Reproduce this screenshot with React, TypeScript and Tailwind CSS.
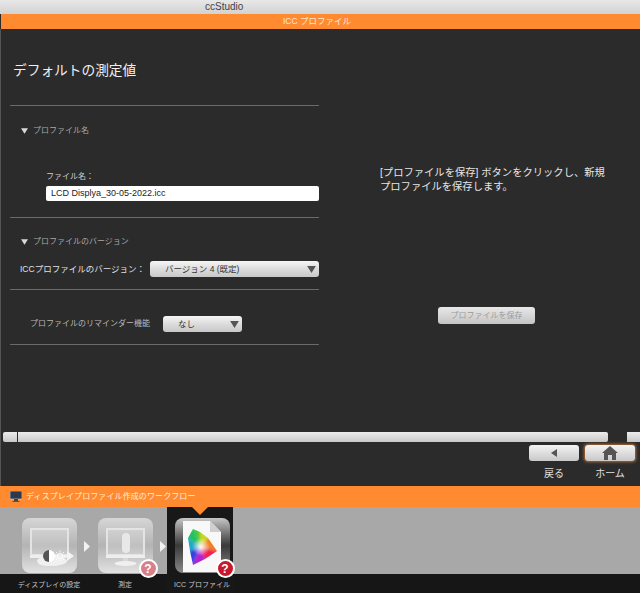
const JP = "font-['Liberation_Sans','Noto_Sans_CJK_JP',sans-serif]";

function Caret({ className = "" }: { className?: string }) {
	return (
		<svg viewBox="0 0 10 8" className={className}>
			<polygon points="0,0 10,0 5,8" fill="currentColor" />
		</svg>
	);
}

function Rule() {
	return <div className="h-px bg-[#6a6a6a] shrink-0" />;
}

function Section({ label }: { label: string }) {
	return (
		<div className="flex items-center gap-[5px] pl-[11px] h-3">
			<Caret className="w-[7px] h-[6px] text-[#d8d8d8] -mt-px" />
			<span className="text-[8px] leading-3 text-[#a8a8a8]">{label}</span>
		</div>
	);
}

function Select({ label, className }: { label: string; className: string }) {
	return (
		<div className={`flex items-center justify-between rounded-[3px] h-4 bg-gradient-to-b from-[#f6f6f6] via-[#dcdcdc] to-[#c8c8c8] ${className}`}>
			<span className="text-[8.5px] leading-4 text-[#333]">{label}</span>
			<Caret className="w-[11px] h-[7px] text-[#555]" />
		</div>
	);
}

function Badge({ faded = false }: { faded?: boolean }) {
	return (
		<div className={`absolute right-[-5px] bottom-[-5px] w-[19px] h-[19px] rounded-full border-2 border-white flex items-center justify-center text-white text-[12px] font-bold leading-none ${faded ? "bg-[#d8808a]" : "bg-[#c8182c]"}`}>
			?
		</div>
	);
}

function Monitor() {
	return (
		<svg viewBox="0 0 55 55" className="absolute inset-0 w-full h-full">
			<rect x="9" y="11" width="37" height="26" fill="#ffffff" fillOpacity="0.16" stroke="#e4e4e4" strokeWidth="2" />
			<rect x="8" y="37" width="39" height="3" fill="#eeeeee" />
			<rect x="25" y="40" width="5" height="4" fill="#d8d8d8" />
			<ellipse cx="27.5" cy="45.5" rx="11" ry="2.5" fill="#f0f0f0" />
		</svg>
	);
}

function Tile({ dark = false, children }: { dark?: boolean; children: React.ReactNode }) {
	return (
		<div className={`relative w-[55px] h-[55px] rounded-[8px] bg-gradient-to-b ${dark ? "from-[#c8c8c8] via-[#3a3a3a] to-[#8a8a8a]" : "from-[#d6d6d6] via-[#b4b4b4] to-[#e2e2e2]"}`}>
			{children}
		</div>
	);
}

function Step({ label, active = false, children }: { label: string; active?: boolean; children: React.ReactNode }) {
	return (
		<div className={`flex flex-col items-center ${active ? "w-[66px] pl-[4px] bg-[#181818]" : "w-[76px]"}`}>
			<div className="h-[67px] pb-px flex items-end">{children}</div>
			<div className="h-[19px] text-[7px] leading-[21px] text-[#c4c4c4] whitespace-nowrap">{label}</div>
		</div>
	);
}

function Arrow() {
	return (
		<svg viewBox="0 0 6 11" className="w-[6px] h-[11px] shrink-0 mt-[34px] mx-[-3px] z-10">
			<polygon points="0,0 6,5.5 0,11" fill="#f2f2f2" />
		</svg>
	);
}

const gamut = ["#f08020", "#c8d820", "#40c840", "#20c060", "#20a8c8", "#3040e0", "#b020d0", "#f02050"];
const edge = [
	[33, 33], [24, 20], [16, 14], [9, 11], [4, 20], [6, 33], [9, 47], [21, 41], [33, 33],
];

function IccIcon() {
	return (
		<svg viewBox="0 0 55 55" className="absolute inset-0 w-full h-full">
			<defs>
				<radialGradient id="core">
					<stop offset="0" stopColor="#ffffff" stopOpacity="0.95" />
					<stop offset="1" stopColor="#ffffff" stopOpacity="0" />
				</radialGradient>
				<clipPath id="shoe">
					<polygon points={edge.map((p) => p.join(",")).join(" ")} />
				</clipPath>
				<filter id="soft" x="-20%" y="-20%" width="140%" height="140%">
					<feGaussianBlur stdDeviation="1.6" />
				</filter>
			</defs>
			<polygon points="8,3 35,3 46,14 46,54 8,54" fill="#f8f8f8" />
			<polygon points="35,3 46,14 35,14" fill="#cfcfcf" />
			<g transform="translate(9 0)">
				<g clipPath="url(#shoe)">
					<g filter="url(#soft)">
						{gamut.map((fill, i) => (
							<polygon
								key={i}
								points={`16,29 ${edge[i][0] * 2 - 16},${edge[i][1] * 2 - 29} ${edge[i + 1][0] * 2 - 16},${edge[i + 1][1] * 2 - 29}`}
								fill={fill}
							/>
						))}
					</g>
					<circle cx="17" cy="29" r="9" fill="url(#core)" />
				</g>
			</g>
		</svg>
	);
}

export default function App() {
	return (
		<div className={`w-[640px] h-[593px] overflow-hidden flex flex-col bg-[#2b2b2b] ${JP}`}>
			<div className="h-[14px] shrink-0 pl-[205px] bg-gradient-to-b from-[#e8e8e8] to-[#d2d2d2] text-[10px] leading-[14px] text-[#444]">
				ccStudio
			</div>
			<div className="h-[15px] shrink-0 ml-px pl-[282px] bg-[#ff8a30] text-[8.5px] leading-[15px] text-[#ffe8d4]">
				ICC プロファイル
			</div>

			<div className="h-[457px] shrink-0 flex flex-col border-l border-[#555]">
				<div className="h-[403px] flex shrink-0">
					<div className="w-[309px] ml-[9px] shrink-0 flex flex-col">
						<h1 className="h-[76px] pl-[3px] pt-[33px] text-[13.7px] leading-[18px] text-[#f0f0f0]">デフォルトの測定値</h1>
						<Rule />
						<div className="mt-[19px]"><Section label="プロファイル名" /></div>
						<div className="mt-[34px] pl-[36px] text-[8px] leading-3 text-[#d0d0d0]">ファイル名：</div>
						<div className="mt-[3px] ml-[36px] h-[15px] rounded-[2px] bg-white pl-[5px] text-[9px] leading-[15px] text-[#222]">
							LCD Displya_30-05-2022.icc
						</div>
						<div className="mt-[16px]"><Rule /></div>
						<div className="mt-[18px]"><Section label="プロファイルのバージョン" /></div>
						<div className="mt-[13px] flex items-center pl-[10px]">
							<span className="w-[130px] text-[8.5px] leading-4 text-[#e0e0e0]">ICCプロファイルのバージョン：</span>
							<Select label="バージョン 4 (既定)" className="w-[169px] pl-[15px] pr-[2px]" />
						</div>
						<div className="mt-[12px]"><Rule /></div>
						<div className="mt-[26px] flex items-center pl-[20px]">
							<span className="w-[133px] text-[8px] leading-4 text-[#b8b8b8]">プロファイルのリマインダー機能</span>
							<Select label="なし" className="w-[79px] pl-[15px] pr-[2px]" />
						</div>
						<div className="mt-[12px]"><Rule /></div>
					</div>

					<div className="flex-1 flex flex-col pl-[61px] pt-[137px]">
						<p className="w-[232px] text-[10.3px] leading-[14px] text-[#e6e6e6]">
							[プロファイルを保存] ボタンをクリックし、新規プロファイルを保存します。
						</p>
						<div className="mt-[113px] ml-[58px] w-[97px] h-[17px] rounded-[3px] bg-gradient-to-b from-[#e8e8e8] to-[#c4c4c4] text-center text-[8px] leading-[17px] text-[#9a9a9a]">
							プロファイルを保存
						</div>
					</div>
				</div>

				<div className="h-[10px] flex shrink-0 gap-px pl-[2px]">
					<div className="w-[14px] rounded-l-[2px] bg-gradient-to-b from-[#ececec] to-[#c8c8c8]" />
					<div className="w-[590px] rounded-r-[2px] bg-gradient-to-b from-[#ececec] to-[#c8c8c8]" />
					<div className="ml-[18px] flex-1 bg-gradient-to-b from-[#ececec] to-[#c8c8c8]" />
				</div>

				<div className="mt-[3px] flex justify-end gap-[6px] pr-[5px]">
					<div className="w-[50px] flex flex-col items-center">
						<div className="w-[50px] h-4 rounded-[3px] bg-gradient-to-b from-[#f4f4f4] to-[#c8c8c8] flex items-center justify-center">
							<svg viewBox="0 0 6 8" className="w-[6px] h-2"><polygon points="6,0 6,8 0,4" fill="#555" /></svg>
						</div>
						<span className="mt-[6px] text-[10px] leading-[14px] text-[#e0e0e0]">戻る</span>
					</div>
					<div className="w-[50px] flex flex-col items-center">
						<div className="w-[50px] h-4 rounded-[3px] bg-gradient-to-b from-[#f4f4f4] to-[#c8c8c8] shadow-[0_0_3px_1px_#b87030] flex items-center justify-center">
							<svg viewBox="0 0 16 14" className="w-[16px] h-[14px]">
								<path d="M8 0 L16 7 L14 7 L14 14 L10 14 L10 9 L6 9 L6 14 L2 14 L2 7 L0 7 Z" fill="#555" />
							</svg>
						</div>
						<span className="mt-[6px] text-[10px] leading-[14px] text-[#e0e0e0]">ホーム</span>
					</div>
				</div>
			</div>

			<div className="h-[21px] shrink-0 bg-[#ff8a30] flex items-center gap-[4px] pl-[10px] relative">
				<svg viewBox="0 0 12 11" className="w-3 h-[11px]">
					<rect x="0" y="0" width="12" height="8" fill="#2c3a4c" stroke="#dddddd" strokeWidth="0.6" />
					<rect x="4" y="8" width="4" height="2" fill="#444" />
					<rect x="2.5" y="10" width="7" height="1" fill="#555" />
				</svg>
				<span className="text-[8px] leading-[21px] tracking-[0.1px] text-[#ffeede]">ディスプレイプロファイル作成のワークフロー</span>
				<div className="absolute left-[192px] top-[21px] z-20 w-0 h-0 border-x-[8px] border-x-transparent border-t-[8px] border-t-[#ff8a30]" />
			</div>

			<div className="h-[86px] shrink-0 relative flex bg-[linear-gradient(#a8a8a8_0,#a8a8a8_67px,#161616_67px)] pl-[11px]">
				<Step label="ディスプレイの設定">
					<Tile>
						<Monitor />
						<svg viewBox="0 0 55 55" className="absolute inset-0 w-full h-full">
							<ellipse cx="30" cy="43" rx="15" ry="5" fill="#f0f0f0" />
							<circle cx="27" cy="38" r="6" fill="#ffffff" />
							<path d="M27 32 A6 6 0 0 0 27 44 Z" fill="#555" />
							<circle cx="38" cy="38" r="2.5" fill="none" stroke="#ffffff" strokeWidth="1" />
							<path d="M38 32.5V34.5M38 41.5V43.5M32.5 38H34.5M41.5 38H43.5M34 34L35.5 35.5M40.5 40.5L42 42M34 42L35.5 40.5M40.5 35.5L42 34" stroke="#ffffff" strokeWidth="0.8" />
							<polygon points="45,33 52,38 45,43" fill="#f4f4f4" />
						</svg>
					</Tile>
				</Step>
				<Arrow />
				<Step label="測定">
					<Tile>
						<Monitor />
						<svg viewBox="0 0 55 55" className="absolute inset-0 w-full h-full">
							<rect x="24" y="15" width="8" height="20" rx="4" fill="#e8e8e8" />
						</svg>
						<Badge faded />
					</Tile>
				</Step>
				<Arrow />
				<div className="ml-[4px]">
					<Step label="ICC プロファイル" active>
						<Tile dark>
							<IccIcon />
							<Badge />
						</Tile>
					</Step>
				</div>
			</div>
		</div>
	);
}
